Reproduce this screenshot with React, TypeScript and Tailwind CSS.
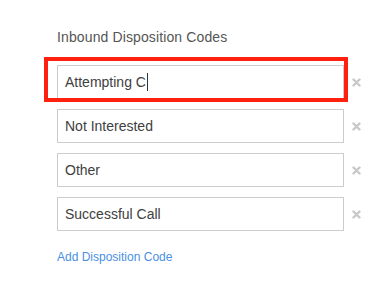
import React from "react";

const XIcon = () => (
  <svg width="9" height="9" viewBox="0 0 9 9" className="shrink-0">
    <path d="M1.5 1.5 L7.5 7.5 M7.5 1.5 L1.5 7.5" stroke="#c8c8c8" strokeWidth="2.4" strokeLinecap="round" />
  </svg>
);

const codes = ["Attempting C", "Not Interested", "Other", "Successful Call"];

export default function App() {
  return (
    <div
      className="w-[378px] h-[295px] bg-white relative"
      style={{ fontFamily: '"Liberation Sans", Arial, sans-serif' }}
    >
      <div className="pl-[57px] pt-[29px]">
        <div className="text-[14px] leading-[16px] text-[#555555] tracking-[0.12px]">Inbound Disposition Codes</div>
        <div className="mt-[20px] flex flex-col gap-[10px]">
          {codes.map((c, i) => (
            <div key={c} className="flex items-center gap-[8px]">
              <div className="w-[287px] h-[34px] border border-[#cccccc] flex items-center px-[7px] text-[14px] text-[#404040]">
                <span>{c}</span>
                {i === 0 && <span className="w-px h-[18px] bg-[#333333] ml-px" />}
              </div>
              <XIcon />
            </div>
          ))}
        </div>
        <div className="mt-[19px] text-[12px] leading-[14px] text-[#4a90e2]">Add Disposition Code</div>
      </div>
      <div className="absolute left-[44px] top-[57px] w-[304px] h-[45px] border-4 border-[#ff2010]" />
    </div>
  );
}
